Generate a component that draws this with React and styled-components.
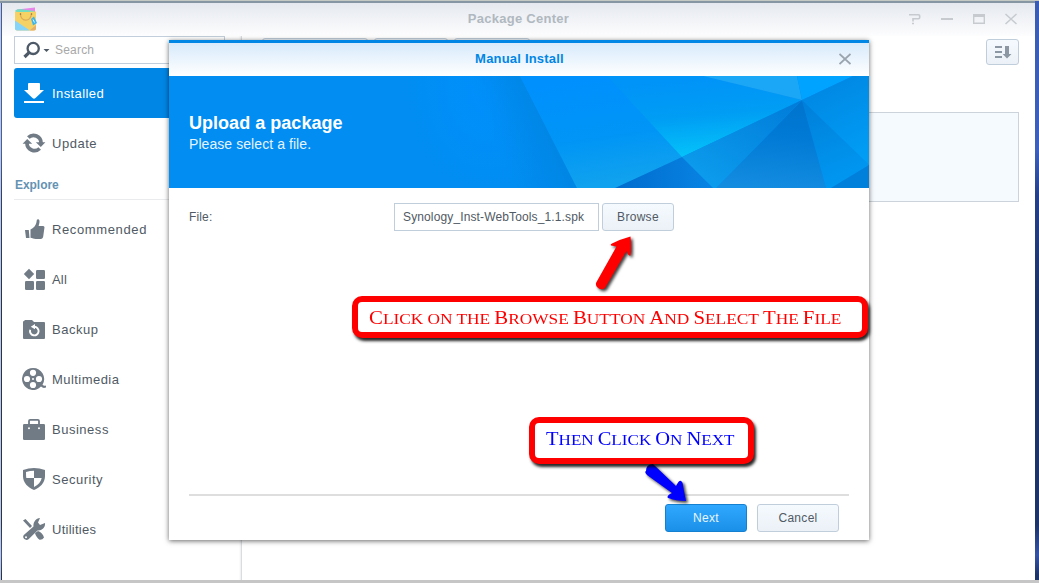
import React from "react";
import styled, { createGlobalStyle, css } from "styled-components";

const Global = createGlobalStyle`
  * { box-sizing: border-box; }
  body { margin: 0; overflow: hidden; font-family: "Liberation Sans", Arial, sans-serif; font-size: 12px; color: #505a64; }
`;

const Desktop = styled.div`
  width: 1039px;
  height: 583px;
  padding: 3px 4px 3px 2px;
  background:
    linear-gradient(#c5c9c4, #c5c9c4) 0 0 / 100% 1px no-repeat,
    linear-gradient(#8796a3, #8796a3) 0 1px / 1035px 2px no-repeat,
    linear-gradient(#c6c6c6, #c6c6c6) 0 580px / 100% 3px no-repeat,
    linear-gradient(#c6c6c6, #c6c6c6) 0 0 / 1px 100% no-repeat,
    linear-gradient(#3a5cb4 0, #3c60bc 150px, #24408a 195px, #1d3468 300px, #1d3468 525px, #3553a4 555px, #1d3468 575px);
`;

const Window = styled.div`
  height: 577px;
  display: flex;
  flex-direction: column;
  background: #fff;
  position: relative;
`;

const TitleBar = styled.header`
  height: 33px;
  flex: none;
  display: flex;
  align-items: center;
  justify-content: space-between;
  padding: 0 16px 2px 12px;
  background: linear-gradient(#e5e9ef, #fdfdfe);
`;

const WindowTitle = styled.h1`
  margin: 0;
  font-size: 13px;
  line-height: 30px;
  font-weight: bold;
  letter-spacing: 0.27px;
  color: #b0b8c0;
  flex: 1;
  text-align: center;
  padding-left: 92px;
`;

const Controls = styled.div`
  display: flex;
  gap: 16px;
  svg { display: block; }
`;

const Body = styled.div`
  flex: 1;
  display: flex;
`;

const Sidebar = styled.nav`
  width: 240px;
  padding: 0 17px 0 12px;
  border-right: 1px solid #d9dde0;
  box-shadow: inset -2px 0 2px -1px #eee;
`;

const SearchBox = styled.div`
  height: 28px;
  width: 211px;
  border: 1px solid #c2cedb;
  margin-bottom: 4px;
  display: flex;
  align-items: center;
  padding: 0 8px;
  gap: 5px;
  color: #a8a8a8;
  letter-spacing: 0.2px;
`;

const NavItem = styled.div`
  height: 50px;
  width: 211px;
  display: flex;
  align-items: center;
  gap: 6px;
  padding-left: 8px;
  font-size: 13px;
  letter-spacing: ${(p) => p.$spacing}px;
  color: ${(p) => (p.$active ? "#fff" : "#505a64")};
  background: ${(p) => (p.$active ? "#0086e5" : "transparent")};
  border-radius: 3px;
`;

const Section = styled.h2`
  margin: 0 0 4px;
  padding-left: 1px;
  height: 32px;
  font-size: 12px;
  line-height: 34px;
  letter-spacing: -0.05px;
  color: #6492b3;
  border-bottom: 1px solid #e9ebed;
`;

const NavIcon = styled.svg`
  width: 24px;
  height: 24px;
  flex: none;
  display: block;
  fill: currentColor;
  color: ${(p) => (p.$active ? "#fff" : "#707b86")};
`;

const Main = styled.main`
  flex: 1;
  padding: 2px 16px 0 20px;
`;

const Toolbar = styled.div`
  display: flex;
  gap: 6px;
  height: 74px;
`;

const buttonFace = css`
  border: 1px solid #c0cedb;
  border-radius: 3px;
  background: linear-gradient(#f5faff, #ebf1f6);
`;

const ToolButton = styled.span`
  ${buttonFace}
  width: ${(p) => p.$w}px;
  height: 28px;
`;

const SortButton = styled.span`
  ${buttonFace}
  width: 33px;
  height: 26px;
  margin: 1px 0 0 auto;
  padding: 6px 8px;
  svg { display: block; }
`;

const Card = styled.section`
  height: 90px;
  background: #f5faff;
  border: 1px solid #ccd3da;
`;

const Dialog = styled.section`
  position: absolute;
  left: 167px;
  top: 37px;
  width: 700px;
  height: 500px;
  display: flex;
  flex-direction: column;
  border-top: 3px solid #0086e5;
  background: #fff;
  box-shadow: 0 1px 5px rgba(0, 0, 0, 0.6);
`;

const DialogTitle = styled.header`
  height: 33px;
  flex: none;
  display: flex;
  align-items: center;
  justify-content: flex-end;
  padding: 0 18px 2px 31px;
  background: linear-gradient(#d7eafb, #fff);
  color: #0086e5;
  font-weight: bold;
  letter-spacing: 0.2px;
  font-size: 13px;
  line-height: 31px;
  span { flex: 1; text-align: center; }
`;

const Banner = styled.div`
  height: 112px;
  flex: none;
  display: grid;
  overflow: hidden;
  color: #fff;
  > * { grid-area: 1 / 1; }
`;

const BannerText = styled.div`
  padding: 36px 20px;
  h2 { margin: 0; font: bold 18px/22px "Liberation Sans", sans-serif; letter-spacing: 0.03px; }
  p { margin: 0; font-size: 14px; line-height: 20px; letter-spacing: 0.07px; color: #e6f4ff; }
`;

const Form = styled.div`
  flex: 1;
  display: flex;
  align-items: flex-start;
  padding: 15px 20px;
  line-height: 28px;
`;

const Label = styled.label`
  width: 205px;
  letter-spacing: 0.15px;
`;

const FileField = styled.div`
  width: 205px;
  height: 28px;
  line-height: 26px;
  padding-left: 8px;
  margin-right: 3px;
  border: 1px solid #c0cedb;
  letter-spacing: 0.13px;
  white-space: nowrap;
`;

const Button = styled.button`
  ${buttonFace}
  width: ${(p) => p.$w}px;
  height: 28px;
  padding: 0;
  font: 12px/26px "Liberation Sans", sans-serif;
  letter-spacing: 0.3px;
  color: #505a64;
  ${(p) => p.$primary && css`
    color: #e9f6ff;
    border-color: #1580cf;
    background: linear-gradient(#30a8ff, #1b90e8);
  `}
`;

const Footer = styled.footer`
  height: 46px;
  margin: 0 20px;
  padding: 8px 10px 0 0;
  border-top: 2px solid #dedede;
  display: flex;
  justify-content: flex-end;
  gap: 10px;
`;

const Callout = styled.div`
  position: absolute;
  left: ${(p) => p.$x}px;
  top: ${(p) => p.$y}px;
  width: ${(p) => p.$w}px;
  height: ${(p) => p.$h}px;
  padding: ${(p) => p.$pad};
  border: 6px solid #f00;
  border-radius: 10px;
  background: #fff;
  box-shadow: 2px 3px 3px rgba(0, 0, 0, 0.85);
  color: ${(p) => p.$color};
`;

const Engraved = styled.div`
  display: inline-flex;
  align-items: baseline;
  gap: 3.500px;
  font: 15px/20px "Liberation Serif", serif;
  text-transform: uppercase;
  white-space: nowrap;
  transform: scaleX(${(p) => p.$stretch});
  transform-origin: left;
`;

const Word = styled.span`
  display: block;
  ${(p) => p.$cap && css`&::first-letter { font-size: 18px; line-height: 20px; }`}
`;

const Arrow = styled.svg`
  position: absolute;
  left: ${(p) => p.$x}px;
  top: ${(p) => p.$y}px;
  filter: drop-shadow(2px 2px 1.5px rgba(0, 0, 0, 0.75));
  overflow: visible;
`;

const icons = {
  installed: <><path d="M6 3q0-1 1-1h10q1 0 1 1v6h4l-8.500 8q-1.500 1.500-3 0L2 9h4z" /><path d="M2 20h20v2H2z" /></>,
  update: <>
    <path d="M6.300 6.500A7.500 7.500 0 0 1 19 12M17.700 17.500A7.500 7.500 0 0 1 5 12" fill="none" stroke="currentColor" strokeWidth="3.700" />
    <path d="M.6 12.800 5.200 8l5 4.800zM13.800 11.200h9.600L18.800 16z" />
  </>,
  recommended: <path d="M3 13h3.800l.7 8H4zM8.500 12.500c3-1.500 5.300-4 5.800-6.500l.6-3.200c.7-1.200 2.500-.6 2.600 1.200.1 2-.8 4-.8 5h4.300c1.300 0 1.700 1 1.400 2l-1.200 8.500c-.3 1.500-1 2.500-2.500 2.500h-5c-2 0-3.200-1-5.200-1.200z" />,
  all: <><path d="M7 1.800 12.200 7 7 12.200 1.800 7z" /><rect x="14" y="3" width="9" height="9" rx="1.200" /><rect x="3" y="14" width="9" height="9" rx="1.200" /><rect x="14" y="14" width="9" height="9" rx="1.200" /></>,
  backup: <>
    <path d="M1 5q0-1 1-1l1-1h7l2 2h10q1 0 1 1v15q0 1-1 1H2q-1 0-1-1z" />
    <path d="M8.200 12.800a4.300 4.300 0 1 0 4.300-3" fill="none" stroke="#fff" strokeWidth="1.900" />
    <path d="M8.800 9.700 13 7v5.200z" fill="#fff" />
  </>,
  multimedia: <>
    <path d="M11 1a11 11 0 1 0 8 18.600c1.500 1.400 3 1.600 5 .9v-2c-1.500.5-2.500.2-3.500-.8A11 11 0 0 0 11 1z" />
    <g fill="#fff"><circle cx="11" cy="5.800" r="3.100" /><circle cx="11" cy="18" r="3.100" /><circle cx="5" cy="12" r="3.100" /><circle cx="17" cy="12" r="3.100" /><circle cx="11" cy="12" r="1" /></g>
  </>,
  business: <>
    <path d="M7 8V4q0-1.200 1.200-1.200h7.600Q17 2.800 17 4v4" fill="none" stroke="currentColor" strokeWidth="1.800" />
    <rect x="1" y="7" width="22" height="16" rx="1.200" /><circle cx="7" cy="11.200" r="1" fill="#fff" /><circle cx="17" cy="11.200" r="1" fill="#fff" />
  </>,
  security: <>
    <path d="M1 3q11-4 22 0v6c0 7-5 11.500-11 14C6 20.500 1 16 1 9z" />
    <path d="M4 5q4-1.300 8-1.300V11H4.300Q4 9 4 5zM12 11h7.700c-.7 4-3.500 7-7.700 9z" fill="#fff" />
  </>,
  utilities: <>
    <path d="M1 3.500 3.500 2 10 9l-2 2zM13 16l3-2c3 .8 5.200 3.500 6 6.500q-1.500 2.500-4.500 2.200c-2-1.500-4-4-4.500-6.700z" />
    <path d="M1.800 18 11.500 9.500c-.5-4 2-8 6.500-8.500l-2 4.500 2 2.500 5-2c.5 4.500-3 8-7.500 7.500L6.500 22.300c-2.500 2-7-1-4.700-4.300z" />
    <circle cx="4" cy="20.300" r="1" fill="#fff" />
  </>,
};

const Item = ({ id, label, active, spacing = 0.52 }) => (
  <NavItem $active={active} $spacing={spacing}>
    <NavIcon viewBox="0 0 24 24" $active={active}>{icons[id]}</NavIcon>
    <span>{label}</span>
  </NavItem>
);

const categories = [
  ["recommended", "Recommended", 0.62],
  ["all", "All", 0.2],
  ["backup", "Backup"],
  ["multimedia", "Multimedia", 0.45],
  ["business", "Business"],
  ["security", "Security"],
  ["utilities", "Utilities", 0.25],
];

const PackageIcon = () => (
  <svg width="24" height="24" viewBox="0 0 24 24">
    <path d="M3 2.500 21 .5V6H3z" fill="#e884ea" />
    <path d="M1.500 3 6 2l14 2v2H1.500z" fill="#74dcc0" />
    <path d="M1 4.500q3 1 21 0v17q0 2-2 2H3q-2 0-2-2z" fill="#f6d264" />
    <path d="M1 13.500l15 10H3q-2 0-2-2z" fill="#86d4f8" />
    <path d="M15.500 23.500 22 18v3.500q0 2-2 2z" fill="#e5b06c" />
    <path d="M6.500 7c0 7.500 9.500 9 11 0" fill="none" stroke="#dcab5a" strokeWidth="1.300" />
    <circle cx="6.500" cy="7" r=".8" fill="#806c4b" /><circle cx="17.500" cy="7" r=".8" fill="#806c4b" />
    <path d="m17 12 3-2.500 3 6.500-4 2.500z" fill="#3fb5ec" /><path d="m19 12.500 1.500 3" stroke="#d9f4ff" />
  </svg>
);

const Facets = () => (
  <svg width="700" height="112" viewBox="0 0 700 112">
    <defs>
      <radialGradient id="base" gradientUnits="userSpaceOnUse" cx="320" cy="12" r="85" gradientTransform="translate(320 12) scale(1 1.300) translate(-320 -12)"><stop offset="0" stopColor="#0090fd" /><stop offset="1" stopColor="#018df1" /></radialGradient>
      <linearGradient id="fold" gradientUnits="userSpaceOnUse" x1="330" y1="75" x2="385" y2="50"><stop offset="0" stopColor="#0086e4" stopOpacity="0" /><stop offset="1" stopColor="#0086e4" /></linearGradient>
      <linearGradient id="left" x1="0" y1="0" x2=".25" y2="1"><stop offset=".1" stopColor="#0090fe" /><stop offset=".6" stopColor="#0095f6" /><stop offset="1" stopColor="#10a2ee" /></linearGradient>
      <linearGradient id="cyan" x1=".55" y1="0" x2=".75" y2="1"><stop offset="0" stopColor="#0093f8" /><stop offset=".45" stopColor="#009df4" /><stop offset="1" stopColor="#05c8fa" /></linearGradient>
      <linearGradient id="deep" x1=".5" y1="0" x2=".4" y2="1"><stop offset="0" stopColor="#0074ce" /><stop offset=".4" stopColor="#007ad5" /><stop offset="1" stopColor="#138ce0" /></linearGradient>
      <linearGradient id="mid" x1="1" y1="0" x2=".2" y2="1"><stop offset="0" stopColor="#007bd8" /><stop offset="1" stopColor="#0c9dee" /></linearGradient>
      <linearGradient id="low"><stop offset="0" stopColor="#006cce" /><stop offset="1" stopColor="#0884e4" /></linearGradient>
      <linearGradient id="right" x1=".3" y1="0" x2=".7" y2="1"><stop offset="0" stopColor="#0086e2" /><stop offset="1" stopColor="#009df5" /></linearGradient>
      <linearGradient id="wedge" x1=".2" y1="0" x2=".5" y2="1"><stop offset="0" stopColor="#0080da" /><stop offset="1" stopColor="#0098f2" /></linearGradient>
    </defs>
    <path d="M0 0h700v112H0z" fill="url(#base)" />
    <path d="M300 0h51l57 112H300z" fill="url(#fold)" />
    <path d="M351 0h87l106 112H408z" fill="url(#left)" />
    <path d="M438 0h96l99 24-120 57z" fill="url(#cyan)" />
    <path d="M534 0h94l5 24z" fill="#1ba6f6" />
    <path d="M628 0h56l-51 24z" fill="#00a3ff" />
    <path d="M684 0h16v89l-67-65z" fill="url(#right)" />
    <path d="m633 24 67 65-38 23h-5z" fill="url(#wedge)" />
    <path d="M700 89v23h-38z" fill="#0080da" />
    <path d="m633 24 24 88H547z" fill="url(#deep)" />
    <path d="M633 24 547 112h-3l-31-31z" fill="url(#mid)" />
    <path d="m513 81 31 31h-98z" fill="url(#low)" />
  </svg>
);

const CapsLine = ({ text, stretch }) => (
  <Engraved $stretch={stretch}>
    {text.split(" ").map((w, i) => <Word key={i} $cap={w[0] !== w[0].toLowerCase()}>{w}</Word>)}
  </Engraved>
);

export default function App() {
  return (
    <Desktop>
      <Global />
      <Window>
        <TitleBar>
          <PackageIcon />
          <WindowTitle>Package Center</WindowTitle>
          <Controls>
            <svg width="16" height="14" fill="none" stroke="#c7cbd0" strokeWidth="1.600"><path d="M2 2.800h9.500q1.200 0 1.200 1.200v1.600q0 1.200-1.200 1.200H6v2.700M5 11.500h2" /></svg>
            <svg width="16" height="14" stroke="#c7cbd0" strokeWidth="2"><path d="M2 7h12" /></svg>
            <svg width="16" height="14" fill="none" stroke="#c7cbd0"><path d="M2.700 2.700h10.600v8.600H2.700z" strokeWidth="1.400" /><path d="M2 3.500h12" strokeWidth="3" /></svg>
            <svg width="16" height="14" stroke="#c7cbd0" strokeWidth="1.500"><path d="m2.500 2 11 10m0-10-11 10" /></svg>
          </Controls>
        </TitleBar>
        <Body>
          <Sidebar>
            <SearchBox>
              <svg width="27" height="20" viewBox="0 0 27 20">
                <circle cx="10.200" cy="8.400" r="5.600" fill="none" stroke="#4d5966" strokeWidth="2.300" />
                <path d="M6.500 12.200 1.500 17" stroke="#4d5966" strokeWidth="3.200" />
                <path d="M20.500 9h6l-3 3z" fill="#4d5966" />
              </svg>
              <span>Search</span>
            </SearchBox>
            <Item id="installed" label="Installed" active spacing={0.4} />
            <Item id="update" label="Update" />
            <Section>Explore</Section>
            {categories.map(([id, label, spacing]) => <Item key={id} id={id} label={label} spacing={spacing} />)}
          </Sidebar>
          <Main>
            <Toolbar>
              <ToolButton $w={106} />
              <ToolButton $w={74} />
              <ToolButton $w={76} />
              <SortButton>
                <svg width="17" height="13" viewBox="0 0 17 13" fill="#8b97a3"><path d="M0 0h7v2H0zM0 5h7v2H0zM0 10h7v2H0zM10 0h4v8h2.500L12 12.500 7.700 8H10z" /></svg>
              </SortButton>
            </Toolbar>
            <Card />
          </Main>
        </Body>
        <Dialog>
          <DialogTitle>
            <span>Manual Install</span>
            <svg width="12" height="12" stroke="#9aa4ae" strokeWidth="1.800"><path d="m.5 1 11 10m0-10L.5 11" /></svg>
          </DialogTitle>
          <Banner>
            <Facets />
            <BannerText>
              <h2>Upload a package</h2>
              <p>Please select a file.</p>
            </BannerText>
          </Banner>
          <Form>
            <Label>File:</Label>
            <FileField>Synology_Inst-WebTools_1.1.spk</FileField>
            <Button $w={72}>Browse</Button>
          </Form>
          <Footer>
            <Button $w={82} $primary>Next</Button>
            <Button $w={82}>Cancel</Button>
          </Footer>
        </Dialog>
        <Arrow $x={593} $y={233} width="38" height="54" viewBox="0 0 38 54">
          <path d="M35.500.5q1 10 0 19-2 1-4-4.500L10 52q-4 3-8-1-2-3-.5-5L21.500 10.500 16 9.500q-1-1 1-2Q26 3 35.500.5z" fill="#f00" />
        </Arrow>
        <Callout $x={350} $y={293} $w={516} $h={42} $pad="6px 0 0 11px" $color="#f00">
          <CapsLine text="Click on the Browse Button And Select The File" stretch={1.156} />
        </Callout>
        <Arrow $x={642} $y={459} width="44" height="42" viewBox="0 0 44 42">
          <path d="M2 9Q2 2 9 2L32 24q3-6 5-5 2 1 2 5l3 15q-10 0-18-3-2-2 4-5L3 13Q0 10 2 9Z" fill="#00f" />
        </Arrow>
        <Callout $x={527} $y={414} $w={225} $h={47} $pad="6px 0 0 11px" $color="#00f">
          <CapsLine text="Then Click On Next" stretch={1.14} />
        </Callout>
      </Window>
    </Desktop>
  );
}
